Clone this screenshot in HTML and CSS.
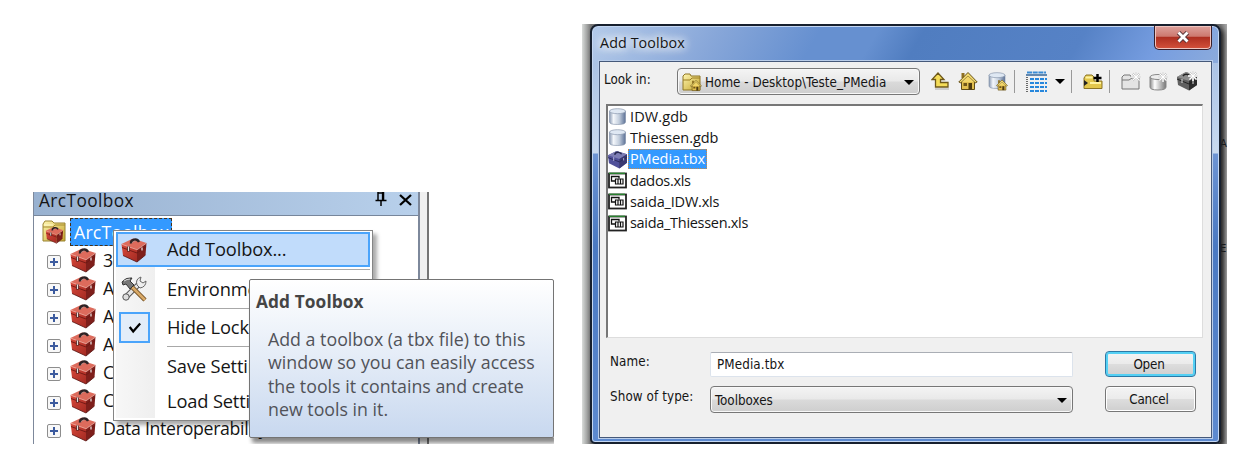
FILE: index.html
```html
<!DOCTYPE html>
<html lang="en">
<head>
<meta charset="utf-8">
<title>Add Toolbox</title>
<link rel="stylesheet" href="styles.css">
</head>
<body>
<svg class="defs" width="0" height="0" aria-hidden="true">
  <defs>
    <linearGradient id="cyl" x1="0" x2="1"><stop offset="0" stop-color="#8b9bb4"/><stop offset=".25" stop-color="#f4f7fb"/><stop offset=".6" stop-color="#c3cedd"/><stop offset="1" stop-color="#5c7196"/></linearGradient>
    <linearGradient id="gcyl" x1="0" x2="1"><stop offset="0" stop-color="#8c8c8c"/><stop offset=".3" stop-color="#fff"/><stop offset="1" stop-color="#777"/></linearGradient>
    <linearGradient id="fold" x1="0" x2="1" y2="1"><stop offset="0" stop-color="#fff6b0"/><stop offset="1" stop-color="#c5a52e"/></linearGradient>
    <linearGradient id="red" x1="0" x2="1" y2="1"><stop offset="0" stop-color="#d9493b"/><stop offset="1" stop-color="#a32a22"/></linearGradient>
    <symbol id="toolbox" viewBox="0 0 26 26">
      <path d="M.5 7 12 1.500 25.500 6 16 12.500z" fill="#dd6b5c"/>
      <path d="M.5 7 16 12.500V25L2 18.500z" fill="url(#red)"/>
      <path d="M16 12.500 25.500 6 24.500 18 16 25z" fill="#7e1f1b"/>
      <path d="M1 10.500l15 5.500 9-6.500" fill="none" stroke="#6d1713" stroke-width=".9"/>
      <path d="M.8 7.300 16 12.800l9.300-6.500" fill="none" stroke="#f0a79b" stroke-width=".8"/>
      <path d="M10 6.500q-.5-3 3-3.800t5 2.300" fill="none" stroke="#2d2325" stroke-width="2.300"/>
      <path d="M11 6q1-2 3.500-2" fill="none" stroke="#a99" stroke-width=".7"/>
      <path d="M7.500 9.500v5" stroke="#3a1513" stroke-width="2.600"/><path d="M7.500 9.500v4.500M21 10.500v3" stroke="#e8dedc" stroke-width="1.300"/>
      <path d="M2 18.500 16 25l8.500-7" fill="none" stroke="#55100e" stroke-width=".8"/>
    </symbol>
    <symbol id="bluebox" viewBox="0 0 20 19">
      <path d="M0 5 9 .5 20 4v9l-8 6L1 13.500z" fill="#50509a"/>
      <path d="M0 5 9 .5 20 4l-8 5z" fill="#7d7db5"/>
      <path d="M12 9l8-5v9l-8 6z" fill="#3a396f"/>
      <path d="M0 7.500l12 4.500 8-5" fill="none" stroke="#2b2b5c"/>
      <path d="M7 4.500q1-3 4-2.500t3 2" fill="none" stroke="#25274d" stroke-width="1.600"/>
      <path d="M6 7v4M16.500 8v2.500" stroke="#b5b6dc"/>
    </symbol>
    <symbol id="cylinder" viewBox="0 0 18 17">
      <path d="M1 3v11q0 2.500 8 2.500t8-2.500V3z" fill="url(#cyl)" stroke="#7e8da6" stroke-width=".6"/>
      <ellipse cx="9" cy="3.200" rx="8" ry="2.500" fill="#dfe8f3" stroke="#8998ae" stroke-width=".7"/>
    </symbol>
    <symbol id="sheet" viewBox="0 0 19 16">
      <rect x="1" y="1" width="17" height="14" fill="#fff" stroke="#222" stroke-width="1.800"/>
      <path d="M1 .8h16" stroke="#2a8730" stroke-width="1.300"/>
      <path d="M8 8.500H3.500V4H11v2" fill="none" stroke="#111" stroke-width="1.300"/>
      <path d="M7.500 6.500H15v5H7.500zM10 7v4M12.500 7v4" fill="none" stroke="#111" stroke-width="1.200"/>
    </symbol>
    <symbol id="house" viewBox="0 0 20 20">
      <path d="M3.500 9.500v9h13v-9" fill="#e2bf4f" stroke="#604c16"/>
      <path d="M3.500 2h3v5h-3z" fill="#8f7022"/>
      <path d="M.8 11 10 1.500 19.200 11l-2 .8L10 5l-7.200 6.800z" fill="#f4dc70" stroke="#66501a"/>
      <path d="M10 5l6 6H4z" fill="#f2d568"/>
      <path d="M10.500 12h3.500v6.500h-3.500z" fill="#4e3b10"/><path d="M5.500 12h3.500v3H5.500z" fill="#715719"/>
    </symbol>
    <symbol id="spark" viewBox="0 0 10 10">
      <path d="M5 0v10M0 5h10M1.500 1.500l7 7M8.500 1.500l-7 7" stroke="#c8c8c8" stroke-width="2"/>
      <path d="M5 0v10M0 5h10M1.500 1.500l7 7M8.500 1.500l-7 7" stroke="#fff"/>
    </symbol>
  </defs>
</svg>

<main class="stage">
  <section class="capture desk">
    <div class="panel">
      <header class="panel-head"><span class="panel-title">ArcToolbox</span>
        <svg class="pin" viewBox="0 0 12 14"><path d="M3 0v8M8.500 0v8M3 1h5" fill="none" stroke="#000" stroke-width="1.500"/><path d="M7.600 0v8" stroke="#000" stroke-width="1.500"/><path d="M.5 8.500h11M6 8.500V14" stroke="#000" stroke-width="1.500"/></svg>
        <svg class="close" viewBox="0 0 13 12"><path d="M1 1l11 10M12 1 1 11" stroke="#000" stroke-width="2.300"/></svg>
      </header>
      <div class="tree">
        <div class="root">
          <svg class="root-icon" viewBox="0 0 24 24"><path d="M1 21V4l2-3h7l2 2h11v18z" fill="url(#fold)" stroke="#9a8332"/><path d="M1 7h10l2-2h10" fill="none" stroke="#a58b30"/><path d="M2 5h9" stroke="#fffbd0"/><use href="#toolbox" x="3" y="6" width="19" height="18"/></svg>
          <span class="root-label">ArcToolbox</span>
        </div>
        <div class="node"><i class="plus"></i><svg class="tb"><use href="#toolbox"/></svg><span>3</span></div>
        <div class="node"><i class="plus"></i><svg class="tb"><use href="#toolbox"/></svg><span>A</span></div>
        <div class="node"><i class="plus"></i><svg class="tb"><use href="#toolbox"/></svg><span>A</span></div>
        <div class="node"><i class="plus"></i><svg class="tb"><use href="#toolbox"/></svg><span>A</span></div>
        <div class="node"><i class="plus"></i><svg class="tb"><use href="#toolbox"/></svg><span>C</span></div>
        <div class="node"><i class="plus"></i><svg class="tb"><use href="#toolbox"/></svg><span>C</span></div>
        <div class="node"><i class="plus"></i><svg class="tb"><use href="#toolbox"/></svg><span>Data Interoperability</span></div>
      </div>
    </div>
    <div class="gutter"></div>

    <div class="menu">
      <div class="item active"><svg class="tb"><use href="#toolbox"/></svg><span>Add Toolbox...</span></div>
      <hr>
      <div class="item env"><svg class="tools" viewBox="0 0 26 26"><path d="M4 22 18 8" stroke="#555" stroke-width="5.500"/><path d="M4 22 18 8" stroke="#e6e6e6" stroke-width="3.500"/><circle cx="5" cy="21" r="3.200" fill="#ddd" stroke="#555"/><path d="M16 9q-2-6 4-8l-1 4 3 2 3-2q0 6-6 7z" fill="#eee" stroke="#666"/><path d="M11 11 24 24" stroke="#6d4b20" stroke-width="4.500"/><path d="M11 11 24 24" stroke="#d8a967" stroke-width="2.600"/><path d="M1 6q4-5 10-4l-2 3 4 4-4 4-4-5-3 1z" fill="#777" stroke="#333"/><path d="M3 5q3-2 6-2" stroke="#ddd" fill="none"/></svg><span>Environme</span></div>
      <hr>
      <div class="item lock"><svg class="check" viewBox="0 0 31 31"><path d="M10 15l4 5 8-9" fill="none" stroke="#000" stroke-width="2.600"/></svg><span>Hide Lock</span></div>
      <hr>
      <div class="item save"><span>Save Settin</span></div>
      <div class="item load"><span>Load Settin</span></div>
    </div>

    <div class="tip">
      <h2>Add Toolbox</h2>
      <p>Add a toolbox (a tbx file) to this<br>window so you can easily access<br>the tools it contains and create<br>new tools in it.</p>
    </div>
  </section>

  <section class="capture shot">
    <span class="edge a">A</span><span class="edge e">E</span>
    <div class="window">
      <header class="caption"><span>Add Toolbox</span>
        <div class="x"><svg viewBox="0 0 14 12"><path d="M2.500 1.500l9 9M11.500 1.500l-9 9" stroke="#59363a" stroke-width="4.600"/><path d="M2.500 1.500l9 9M11.500 1.500l-9 9" stroke="#fff" stroke-width="2.800"/></svg></div>
      </header>
      <div class="client">
        <div class="toolbar">
          <label>Look in:</label>
          <div class="combo path"><svg width="20" height="19" viewBox="0 0 20 19"><path d="M1 17V3l2-2h5l1 2h9v14z" fill="url(#fold)" stroke="#8f7624"/><path d="M1 7h7l2-2h8" fill="none" stroke="#9b7e24"/><use href="#house" x="8" y="6" width="12" height="13"/></svg><span>Home - Desktop\Teste_PMedia</span><i class="arrow"></i></div>
          <svg class="t1" width="19" height="18" viewBox="0 0 19 18"><path d="M7 1 1 7.500h3.500V15H17v-4.500H9.500v-3H13z" fill="#f5dd58" stroke="#6e581a" stroke-width="1.300"/><path d="M4 17h14" stroke="#aaa"/></svg>
          <svg class="t2" width="20" height="20"><use href="#house"/></svg>
          <svg class="t3" width="20" height="19" viewBox="0 0 20 19"><use href="#cylinder" width="18" height="17"/><use href="#house" x="8" y="7" width="12" height="12"/></svg>
          <i class="sep"></i>
          <svg class="t4" width="21" height="21" viewBox="0 0 21 21"><path d="M1 1.500h19" stroke="#398bd5" stroke-width="2" stroke-dasharray="5 .7"/><path d="M4 8h17M4 12h17M4 16h17M4 20h17" stroke="#2787dc" stroke-width="2" stroke-dasharray="4 1"/><path d="M1 6v15" stroke="#111" stroke-width="1.200" stroke-dasharray="1 1"/><path d="M0 4h21" stroke="#265b91" stroke-width="1.400"/></svg>
          <i class="arrow view"></i><i class="sep"></i>
          <svg class="t5" width="20" height="17" viewBox="0 0 20 17"><path d="M1 15.500V5l2-3h6l2 2v4h8v7.500z" fill="#e3c74b" stroke="#8b7426"/><path d="M2.500 4.500h7M7 10h11" stroke="#fff3a0" stroke-width="1.800"/><path d="M1 7l4 3-4 3" fill="#222"/><path d="M14.500 1v8M10.500 5h8" stroke="#000" stroke-width="2.500"/></svg>
          <i class="sep"></i>
          <svg class="t6" width="20" height="19" viewBox="0 0 20 19"><path d="M1 17V5l2-2h6l2 3h7v11z" fill="#e4e4e4" stroke="#777"/><path d="M1 8h7l3-2" fill="none" stroke="#777"/><use href="#spark" x="10" y="0" width="10" height="10"/></svg>
          <svg class="t7" width="19" height="19" viewBox="0 0 19 19"><path d="M1 5v10q0 3 8 3t8-3V5z" fill="url(#gcyl)" stroke="#888"/><ellipse cx="9" cy="5" rx="8" ry="2.500" fill="#eee" stroke="#888"/><use href="#spark" x="9" y="0" width="10" height="10"/></svg>
          <svg class="t8" width="21" height="20" viewBox="0 0 21 20"><path d="M0 6 9 1l11 4v9l-8 5.500L1 14z" fill="#606060"/><path d="M0 6 9 1l11 4-8 5z" fill="#8c8c8c"/><path d="M12 10l8-5v9l-8 5.500z" fill="#2c2c2c"/><path d="M0 8l12 5 8-5" fill="none" stroke="#222"/><path d="M5 8v4M16 10v3" stroke="#ddd"/><path d="M6 5q2-3 6-1" fill="none" stroke="#222" stroke-width="1.500"/><use href="#spark" x="11" y="0" width="10" height="10"/></svg>
        </div>
        <ul class="files">
          <li><svg class="fi"><use href="#cylinder"/></svg><span class="f1">IDW.gdb</span></li>
          <li><svg class="fi"><use href="#cylinder"/></svg><span class="f2">Thiessen.gdb</span></li>
          <li class="sel"><svg class="fi box"><use href="#bluebox"/></svg><span class="f3">PMedia.tbx</span></li>
          <li><svg class="fi"><use href="#sheet"/></svg><span>dados.xls</span></li>
          <li><svg class="fi"><use href="#sheet"/></svg><span class="f5">saida_IDW.xls</span></li>
          <li><svg class="fi"><use href="#sheet"/></svg><span>saida_Thiessen.xls</span></li>
        </ul>
        <div class="form">
          <label>Name:</label><div class="input">PMedia.tbx</div><div class="btn default">Open</div>
          <label>Show of type:</label><div class="combo type"><span>Toolboxes</span><i class="arrow"></i></div><div class="btn">Cancel</div>
        </div>
      </div>
    </div>
  </section>
</main>
</body>
</html>
```
FILE: styles.css
```css
* { box-sizing: border-box; }
body { margin: 0; background: #fff; color: #151515; font-family: "Open Sans", sans-serif; overflow: hidden; }
.defs { position: absolute; }
svg { display: block; flex: none; }
.stage { width: 1243px; height: 457px; padding: 24px 16px 13px 33px; display: flex; align-items: flex-end; gap: 28px; }
.capture { position: relative; overflow: hidden; flex: none; }
.desk { width: 521px; height: 252px; display: flex; }
.panel { width: 387px; height: 252px; border: solid #7d889b; border-width: 0 2px 0 1px; flex: none; }
.gutter { width: 9px; background: #f0f0f0; border-right: 2px solid #757575; }
.panel-head { height: 24px; background: linear-gradient(90deg, #98b1d0, #b8d0eb); border-bottom: 1px solid #77869b; display: flex; padding-left: 5px; }
.panel-title { font-size: 17.3px; line-height: 18px; width: 336px; letter-spacing: .4px; }
.pin { width: 12px; height: 14px; }
.close { width: 13px; height: 12px; margin: 2px 0 0 12px; }

.tree { padding-top: 1px; font-size: 17.7px; letter-spacing: -.3px; white-space: nowrap; }
.root { display: flex; height: 29px; padding-left: 8px; align-items: center; }
.root-icon { width: 24px; height: 24px; }
.root-label { margin-left: 4px; width: 102px; height: 28px; line-height: 26px; padding-left: 3px; color: #fff; background: #3399ff; border: 1px dashed #493117; overflow: hidden; letter-spacing: .2px; }
.node { display: flex; align-items: center; height: 28.1px; padding-left: 13px; }
.node span { margin-left: 7px; line-height: 24px; margin-top: -1px; }
.plus { width: 14px; height: 14px; margin-right: 9px; margin-top: 4px; border: 1px solid #8d8d8d; border-radius: 2px; background: linear-gradient(#3b5a9e, #3b5a9e) center/8px 2px no-repeat, linear-gradient(#3b5a9e, #3b5a9e) center/2px 8px no-repeat, #f8f8f8; }
.tb { width: 26px; height: 26px; }

.menu { position: absolute; left: 80px; top: 38px; width: 260px; height: 191px; padding: 1px 2px 2px; border: 1px solid #858585; background: linear-gradient(90deg, #f7f7f7, #efefef) 2px 2px/39px 185px no-repeat, #fff; box-shadow: 4px 4px 4px #0005; font-size: 18.3px; letter-spacing: -.15px; white-space: nowrap; }
.item { display: flex; align-items: center; padding-left: 5px; height: 36px; }
.item span { margin-left: 20px; line-height: 24px; margin-top: -1px; }
.menu hr { margin: 0 0 0 51px; border: 0; height: 1px; background: #a8a8a8; }
.active { height: 35px; background: #c1dcfb; border: 2px solid #4aa4fb; margin-bottom: 2px; padding-left: 3px; }
.item.active span { margin-left: 20px; margin-top: -2px; }
.env { height: 38px; }
.tools { width: 26px; height: 26px; }
.lock { height: 37px; padding-left: 3px; }
.check { width: 31px; height: 31px; border: 2px solid #4aa4fb; background: #e3edf9; }
.lock span { margin-left: 17px; }
.save { height: 39px; padding-left: 31px; }
.load { height: 30px; padding-left: 31px; }

.tip { position: absolute; left: 216px; top: 87px; width: 305px; height: 159px; padding: 10px 0 0 6px; border: 1px solid #747474; border-radius: 2px; background: linear-gradient(#fff, #e4ecf7 50%, #c8d8ef); box-shadow: 3px 5px 4px #0007; color: #515359; white-space: nowrap; }
.tip h2 { margin: 0; font-size: 17.3px; line-height: 24px; letter-spacing: .1px; color: #454545; }
.tip p { margin: 14px 0 0 12px; font-size: 17.8px; line-height: 23.3px; }

.shot { width: 645px; height: 420px; padding-left: 8px; background: linear-gradient(90deg, #d9dcda, #777 9px, #777 638px, #aaa); }
.edge { position: absolute; left: 638px; font-size: 10px; font-family: "DejaVu Sans", sans-serif; color: #111; }
.a { top: 114px; } .e { top: 219px; }
.window { position: relative; width: 631px; height: 420px; border: 2px solid #17202e; border-radius: 8px 8px 5px 5px; padding: 0 7px 6px; background: linear-gradient(120deg, #b3cae9 0, #88a7d9 110px, #6690d0 200px, #6690d0 250px, #507dc0 290px, #5682c6 430px, #769de0 500px, #8cabdc 100%) 0 0/100% 37px no-repeat, linear-gradient(#9eb9e1 0, #c9daef 127px, #6d94d3 128px, #4a79c2 220px, #5d8ad0); box-shadow: inset 0 0 0 1px #c4d7f2, 3px 3px 5px #222; }
.caption { height: 35px; display: flex; justify-content: space-between; }
.caption span { font-size: 14.3px; line-height: 33px; padding-left: 1px; letter-spacing: .1px; text-shadow: 0 0 8px #fff, 0 0 10px #fff, 0 0 14px #fff; }
.x { width: 58px; height: 24px; border: 1px solid #381e29; border-top: 0; border-radius: 0 0 5px 5px; background: linear-gradient(#dda29d, #cd786e 45%, #ad2e20 48%, #d5523c); box-shadow: inset 0 0 0 1px #efc5c0; display: grid; place-items: center; padding-bottom: 2px; }
.x svg { width: 14px; height: 12px; }
.client { height: 377px; border: 1px solid #46597a; background: #f0f0f0; font: 13.3px "DejaVu Sans Condensed", "DejaVu Sans", sans-serif; font-stretch: condensed; letter-spacing: .1px; padding: 0 6px; box-shadow: 0 0 0 1px #b9cdea; }
.toolbar { display: flex; height: 42px; align-items: center; padding-bottom: 4px; margin-left: -2px; }
.toolbar label { width: 71px; height: 22px; line-height: 20px; letter-spacing: 0; }
.combo { border: 1px solid #777; border-radius: 4px; background: linear-gradient(#f4f4f4, #e9e9e9 48%, #dadada 52%, #cecece); box-shadow: inset 0 0 0 1px #f8f8f8; display: flex; align-items: center; white-space: nowrap; }
.path { width: 243px; height: 27px; margin-left: 2px; padding: 2px 5px 0 4px; letter-spacing: .03px; }
.path span { margin-left: 3px; width: 199px; }
.arrow { width: 0; height: 0; border: 5px solid transparent; border-top: 5px solid #000; border-bottom: 0; }
.t1 { margin-left: 11px; } .t2 { margin-left: 8px; } .t3 { margin-left: 10px; }
.sep { width: 1px; height: 23px; background: #999; margin-left: 6px; }
.t4 { margin-left: 11px; } .view { margin-left: 8px; }
.t5 { margin-left: 11px; } .t6 { margin-left: 11px; } .t7 { margin-left: 8px; } .t8 { margin-left: 9px; }
.files { list-style: none; margin: 0; padding: 0; height: 234px; width: 597px; background: #fff; border: 1px solid #777; border-width: 2px 1px 1px 2px; border-right-color: #ddd; border-bottom-color: #ddd; font: 14.5px "Open Sans", sans-serif; letter-spacing: -.3px; }
.files li { height: 21.3px; display: flex; align-items: center; gap: 1px; }
.fi { width: 19px; height: 17px; }
.fi.box { height: 19px; }
.files span { line-height: 20px; padding: 0 2px; }
.files .f1 { letter-spacing: .1px; }
.files .f2 { letter-spacing: -.05px; }
.files .f3 { letter-spacing: -.1px; }
.files .f5 { letter-spacing: -.2px; }
.sel span { background: #3399ff; color: #fff; outline: 1px dotted #cc8844; outline-offset: -1px; }
.form { display: grid; grid-template-columns: 100px 363px 91px; row-gap: 8px; padding: 13px 0 0 4px; }
.form > label { line-height: 22px; height: 27px; }
.input { height: 25px; margin-top: 1px; padding-left: 6px; line-height: 24px; background: #fff; border: 1px solid #dce3ec; border-top-color: #aaaeb5; border-radius: 2px; }
.type { height: 27px; padding: 2px 5px 0 4px; justify-content: space-between; letter-spacing: 0; }
.btn { width: 91px; height: 26px; line-height: 26px; text-align: center; margin-left: 32px; padding-right: 3px; letter-spacing: -.2px; border: 1px solid #777; border-radius: 4px; background: linear-gradient(#f4f4f4, #ebebeb 48%, #dddddd 52%, #cfcfcf); box-shadow: inset 0 0 0 1px #fff; }
.default { border-color: #2c79a5; box-shadow: inset 0 0 0 2px #54d0f4; }
```
